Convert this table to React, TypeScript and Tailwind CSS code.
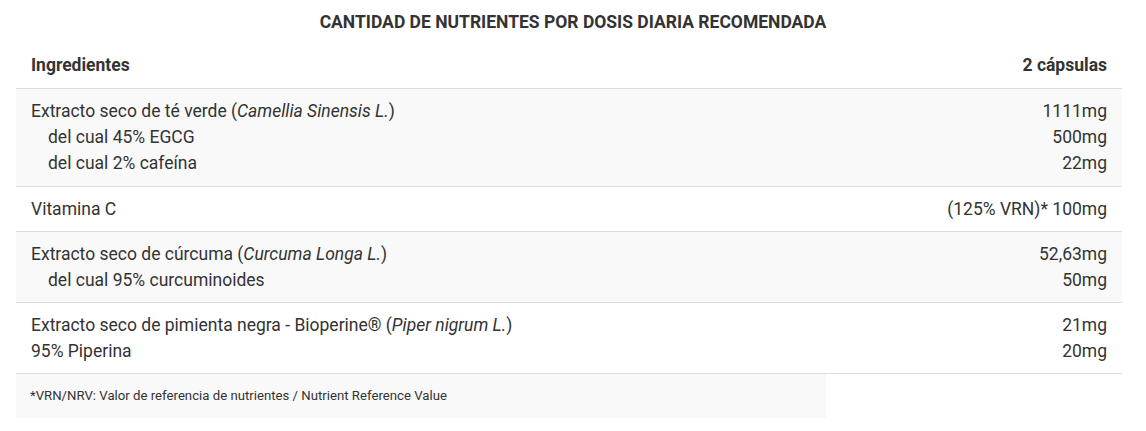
const rows: {
  lines: { label: React.ReactNode; value: string; indent?: boolean }[];
  shaded: boolean;
}[] = [
  {
    shaded: true,
    lines: [
      {
        label: (
          <>
            Extracto seco de té verde (<em>Camellia Sinensis L.</em>)
          </>
        ),
        value: "1111mg",
      },
      { label: "del cual 45% EGCG", value: "500mg", indent: true },
      { label: "del cual 2% cafeína", value: "22mg", indent: true },
    ],
  },
  {
    shaded: false,
    lines: [{ label: "Vitamina C", value: "(125% VRN)* 100mg" }],
  },
  {
    shaded: true,
    lines: [
      {
        label: (
          <>
            Extracto seco de cúrcuma (<em>Curcuma Longa L.</em>)
          </>
        ),
        value: "52,63mg",
      },
      { label: "del cual 95% curcuminoides", value: "50mg", indent: true },
    ],
  },
  {
    shaded: false,
    lines: [
      {
        label: (
          <>
            Extracto seco de pimienta negra - Bioperine® (<em>Piper nigrum L.</em>)
          </>
        ),
        value: "21mg",
      },
      { label: "95% Piperina", value: "20mg" },
    ],
  },
];

export default function App() {
  return (
    <div className="min-h-screen bg-white pt-[9px] font-['Roboto',sans-serif] text-[17.5px] leading-[26px] text-[#333]">
      <h2 className="mb-[7px] text-center text-[17.5px] font-bold uppercase">
        Cantidad de nutrientes por dosis diaria recomendada
      </h2>

      <div className="ml-4 w-[1106px]">
        {/* Header */}
        <div className="flex justify-between border-b border-[#dedede] px-[15px] py-[10px] font-bold">
          <span>Ingredientes</span>
          <span>2 cápsulas</span>
        </div>

        {/* Rows */}
        {rows.map((row, i) => (
          <div
            key={i}
            className={`flex justify-between border-b border-[#dedede] px-[15px] pt-[9px] ${
              i === 0 ? "pb-[10px]" : "pb-[9px]"
            } ${row.shaded ? "bg-[#f9f9f9]" : "bg-white"}`}
          >
            <div className="flex flex-col">
              {row.lines.map((l, j) => (
                <span key={j} className={l.indent ? "pl-[17px]" : ""}>
                  {l.label}
                </span>
              ))}
            </div>
            <div className="flex flex-col items-end">
              {row.lines.map((l, j) => (
                <span key={j}>{l.value}</span>
              ))}
            </div>
          </div>
        ))}
      </div>

      {/* Footnote */}
      <div className="ml-4 flex h-[44px] w-[810px] items-center bg-[#f9f9f9] px-[14px] text-[13.2px]">
        *VRN/NRV: Valor de referencia de nutrientes / Nutrient Reference Value
      </div>
    </div>
  );
}
